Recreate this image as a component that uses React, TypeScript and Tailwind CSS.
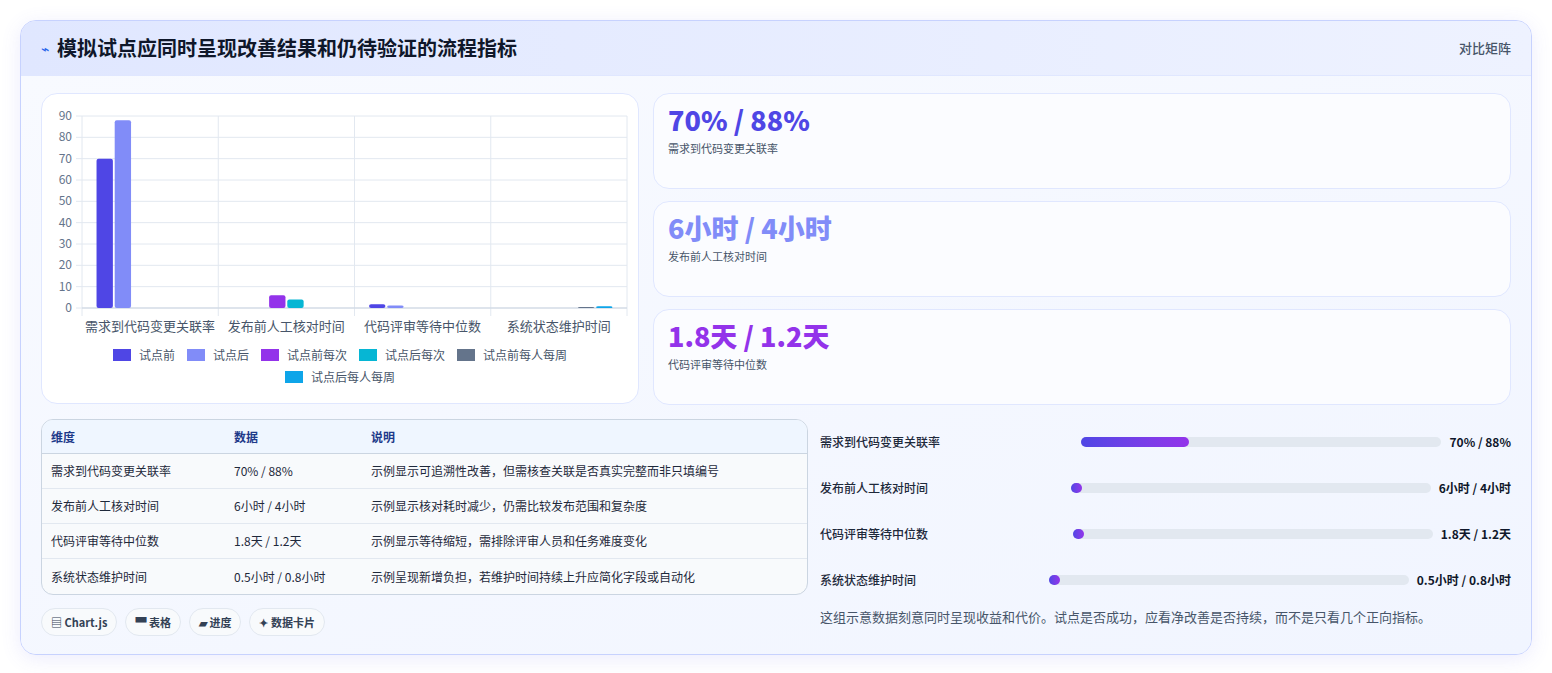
const font = { fontFamily: '"Noto Sans CJK SC", "Noto Sans", sans-serif' }

const groups = ['需求到代码变更关联率', '发布前人工核对时间', '代码评审等待中位数', '系统状态维护时间']
const colors = ['#4f46e5', '#818cf8', '#9333ea', '#06b6d4', '#64748b', '#0ea5e9']
const legend = ['试点前', '试点后', '试点前每次', '试点后每次', '试点前每人每周', '试点后每人每周']
// [group, dataset, value]
const bars: [number, number, number][] = [
    [0, 0, 70], [0, 1, 88], [1, 2, 6], [1, 3, 4], [2, 0, 1.8], [2, 1, 1.2], [3, 4, 0.5], [3, 5, 0.8],
]

const cards = [
    { v: '70% / 88%', l: '需求到代码变更关联率', c: 'text-[#4f46e5]' },
    { v: '6小时 / 4小时', l: '发布前人工核对时间', c: 'text-[#818cf8]' },
    { v: '1.8天 / 1.2天', l: '代码评审等待中位数', c: 'text-[#9333ea]' },
]

const rows = [
    ['需求到代码变更关联率', '70% / 88%', '示例显示可追溯性改善，但需核查关联是否真实完整而非只填编号'],
    ['发布前人工核对时间', '6小时 / 4小时', '示例显示核对耗时减少，仍需比较发布范围和复杂度'],
    ['代码评审等待中位数', '1.8天 / 1.2天', '示例显示等待缩短，需排除评审人员和任务难度变化'],
    ['系统状态维护时间', '0.5小时 / 0.8小时', '示例呈现新增负担，若维护时间持续上升应简化字段或自动化'],
]

const progress = [
    { l: '需求到代码变更关联率', v: '70% / 88%', p: 30 },
    { l: '发布前人工核对时间', v: '6小时 / 4小时', p: 3 },
    { l: '代码评审等待中位数', v: '1.8天 / 1.2天', p: 3 },
    { l: '系统状态维护时间', v: '0.5小时 / 0.8小时', p: 3 },
]

function Chart() {
    const x0 = 40, x1 = 585, y0 = 210, yTop = 18
    const k = (y0 - yTop) / 90
    const cw = (x1 - x0) / 4
    const slot = (cw * 0.8) / 6
    return (
        <svg width="597" height="296" viewBox="0 0 597 296" className="block">
            {Array.from({ length: 10 }).map((_, i) => {
                const y = y0 - i * 10 * k
                return (
                    <g key={i}>
                        <line x1={x0 - 6} x2={x1} y1={y} y2={y} stroke="#e2e8f0" />
                        <text x={x0 - 10} y={y + 4} fontSize="12" fill="#64748b" textAnchor="end">{i * 10}</text>
                    </g>
                )
            })}
            {[0, 1, 2, 3, 4].map((i) => (
                <line key={i} x1={x0 + i * cw} x2={x0 + i * cw} y1={yTop} y2={y0 + 8} stroke="#e2e8f0" />
            ))}
            <line x1={x0} x2={x1} y1={y0} y2={y0} stroke="#cbd5e1" />
            {bars.map(([g, d, v], i) => {
                const h = Math.max(v * k, 1)
                const x = x0 + g * cw + cw * 0.1 + d * slot + slot * 0.05
                return <rect key={i} x={x} y={y0 - h} width={slot * 0.9} height={h} rx="2" fill={colors[d]} />
            })}
            {groups.map((g, i) => (
                <text key={g} x={x0 + i * cw + cw / 2} y={y0 + 23} fontSize="13" fill="#475569" textAnchor="middle">{g}</text>
            ))}
        </svg>
    )
}

export default function App() {
    return (
        <div className="min-h-screen bg-white p-5 text-[#1e293b]" style={font}>
            <div className="rounded-2xl border border-[#c7d2fe] bg-[#f8faff] shadow-[0_4px_20px_rgba(99,102,241,0.12)] overflow-hidden">
                <div className="h-[55px] flex items-center justify-between px-5 bg-gradient-to-r from-[#e0e7ff] to-[#eef2ff] border-b border-[#e0e7ff]">
                    <div className="flex items-center gap-2">
                        <span className="text-[#2563eb] text-sm">⌁</span>
                        <h1 className="text-[20px] font-bold text-[#0f172a]">模拟试点应同时呈现改善结果和仍待验证的流程指标</h1>
                    </div>
                    <span className="text-[13px] font-medium text-[#475569]">对比矩阵</span>
                </div>
                <div className="px-5 pt-[17px] pb-[18px] bg-gradient-to-br from-[#f8faff] to-[#f1f5ff]">
                    <div className="flex gap-[14px]">
                        <div className="w-[598px] h-[311px] rounded-2xl border border-[#e0e7ff] bg-white pt-1">
                            <Chart />
                            <div className="-mt-[48px] flex flex-wrap justify-center gap-x-3 gap-y-1 px-16 text-[12px] text-[#475569]">
                                {legend.map((l, i) => (
                                    <span key={l} className="flex items-center gap-2">
                                        <span className="inline-block w-[18px] h-3" style={{ background: colors[i] }} />
                                        {l}
                                    </span>
                                ))}
                            </div>
                        </div>
                        <div className="flex-1 flex flex-col gap-[12px]">
                            {cards.map((c) => (
                                <div key={c.l} className="h-[96px] rounded-2xl border border-[#e0e7ff] bg-[#fbfcff] px-[14px] pt-[10px]">
                                    <div className={`text-[27px] font-extrabold leading-[32px] ${c.c}`}>{c.v}</div>
                                    <div className="text-[11px] text-[#475569] mt-1">{c.l}</div>
                                </div>
                            ))}
                        </div>
                    </div>
                    <div className="flex gap-3 mt-[14px]">
                        <div className="w-[767px]">
                            <div className="rounded-xl border border-[#cbd5e1] overflow-hidden bg-[#f8fafc] text-[12px]">
                                <div className="flex h-[34px] items-center bg-[#eff6ff] border-b border-[#cbd5e1] font-semibold text-[#1e3a8a]">
                                    <div className="w-[192px] pl-[9px]">维度</div>
                                    <div className="w-[137px]">数据</div>
                                    <div className="flex-1">说明</div>
                                </div>
                                {rows.map((r, i) => (
                                    <div key={i} className={`flex h-[35px] items-center text-[#1e293b] ${i < 3 ? 'border-b border-[#e2e8f0]' : ''}`}>
                                        <div className="w-[192px] pl-[9px]">{r[0]}</div>
                                        <div className="w-[137px]">{r[1]}</div>
                                        <div className="flex-1">{r[2]}</div>
                                    </div>
                                ))}
                            </div>
                            <div className="flex gap-2 mt-[13px] text-[11px] font-semibold text-[#334155]">
                                {['▤ Chart.js', '▀ 表格', '▰ 进度', '✦ 数据卡片'].map((t) => (
                                    <span key={t} className="h-[28px] px-[9px] flex items-center rounded-full border border-[#e2e8f0] bg-[#f8fafc]">{t}</span>
                                ))}
                            </div>
                        </div>
                        <div className="flex-1">
                            {progress.map((p) => (
                                <div key={p.l} className="flex items-center h-[46px] text-[12px] font-medium text-[#1e293b]">
                                    <div className="flex-1">{p.l}</div>
                                    <div className="w-[360px] h-[10px] rounded-full bg-[#e2e8f0] mr-2">
                                        <div className="h-full rounded-full bg-gradient-to-r from-[#4f46e5] to-[#9333ea]" style={{ width: `${p.p}%` }} />
                                    </div>
                                    <div className="font-bold text-[#0f172a] whitespace-nowrap">{p.v}</div>
                                </div>
                            ))}
                            <p className="mt-[4px] text-[13px] text-[#475569]">这组示意数据刻意同时呈现收益和代价。试点是否成功，应看净改善是否持续，而不是只看几个正向指标。</p>
                        </div>
                    </div>
                </div>
            </div>
        </div>
    )
}
